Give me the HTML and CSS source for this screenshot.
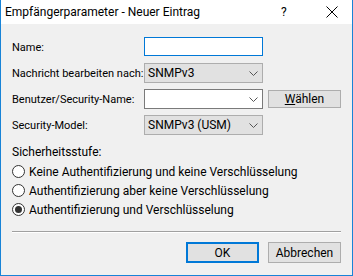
FILE: index.html
```html
<!DOCTYPE html>
<html lang="de">
<head>
    <meta charset="UTF-8">
    <title>Empfängerparameter - Neuer Eintrag</title>
    <link rel="stylesheet" href="styles.css">
</head>
<body>
    <div class="window">
        <div class="titlebar">
            <span class="title">Empfängerparameter - Neuer Eintrag</span>
            <span class="help">?</span>
            <span class="close">
                <svg width="12" height="12" viewBox="0 0 12 12"><path d="M0.5 0.5 L11.5 11.5 M11.5 0.5 L0.5 11.5" stroke="#000" stroke-width="1"/></svg>
            </span>
        </div>

        <div class="content">
            <div class="form">
                <label class="label">Name:</label>
                <div class="input focused"></div>
                <div></div>

                <label class="label">Nachricht bearbeiten nach:</label>
                <div class="select"><span>SNMPv3</span><svg class="chevron" width="9" height="5" viewBox="0 0 9 5"><path d="M0.5 0.5 L4.5 4.5 L8.5 0.5" fill="none" stroke="#555" stroke-width="1"/></svg></div>
                <div></div>

                <label class="label">Benutzer/Security-Name:</label>
                <div class="select combo"><span></span><svg class="chevron" width="9" height="5" viewBox="0 0 9 5"><path d="M0.5 0.5 L4.5 4.5 L8.5 0.5" fill="none" stroke="#555" stroke-width="1"/></svg></div>
                <button class="btn choose"><u>W</u>ählen</button>

                <label class="label">Security-Model:</label>
                <div class="select"><span>SNMPv3 (USM)</span><svg class="chevron" width="9" height="5" viewBox="0 0 9 5"><path d="M0.5 0.5 L4.5 4.5 L8.5 0.5" fill="none" stroke="#555" stroke-width="1"/></svg></div>
                <div></div>
            </div>

            <div class="group-label">Sicherheitsstufe:</div>
            <div class="radios">
                <div class="radio"><span class="dot"></span>Keine Authentifizierung und keine Verschlüsselung</div>
                <div class="radio"><span class="dot"></span>Authentifizierung aber keine Verschlüsselung</div>
                <div class="radio checked"><span class="dot"></span>Authentifizierung und Verschlüsselung</div>
            </div>

            <div class="separator"></div>

            <div class="buttons">
                <button class="btn default">OK</button>
                <button class="btn">Abbrechen</button>
            </div>
        </div>
    </div>
</body>
</html>
```

FILE: styles.css
```css
body {
    margin: 0;
    font-family: Roboto, 'Liberation Sans', sans-serif;
    font-size: 12px;
    color: #000;
    background: #f0f0f0;
}
.window {
    width: 353px;
    height: 276px;
    box-sizing: border-box;
    border: 1px solid #1883d7;
    border-top: none;
    background: #f0f0f0;
}
.titlebar {
    height: 24px;
    background: #fff;
    display: flex;
    align-items: center;
    padding-left: 4px;
}
.title {
    flex: 1;
    font-size: 12px;
}
.help {
    width: 14px;
    margin-right: 31px;
    font-size: 12px;
}
.close {
    display: flex;
    margin-right: 14px;
}
.content {
    padding: 13px 11px 0 11px;
}
.form {
    display: grid;
    grid-template-columns: 127px 119px 73px;
    column-gap: 5px;
    row-gap: 6px;
    grid-auto-rows: 20px;
    align-items: center;
}
.label {
    white-space: nowrap;
    font-size: 11px;
}
.input {
    height: 19px;
    box-sizing: border-box;
    border: 1px solid #0078d7;
    background: #fff;
    align-self: start;
}
.select {
    height: 20px;
    box-sizing: border-box;
    border: 1px solid #adadad;
    background: #e1e1e1;
    display: flex;
    align-items: center;
    justify-content: space-between;
    padding: 0 4px 0 3px;
}
.select.combo {
    background: #fff;
    border-color: #7a7a7a;
}
.chevron {
    display: block;
}
.btn {
    font-family: inherit;
    font-size: 12px;
    color: #000;
    background: #e1e1e1;
    border: 1px solid #adadad;
    padding: 0;
    height: 20px;
    width: 73px;
    box-sizing: border-box;
}
.btn.choose {
    height: 18px;
}
.btn.default {
    border: 2px solid #0078d7;
}
.group-label {
    margin-top: 9px;
    line-height: 16px;
}
.radios {
    margin-top: 2px;
}
.radio {
    height: 19px;
    display: flex;
    align-items: center;
    gap: 4px;
}
.dot {
    width: 13px;
    height: 13px;
    box-sizing: border-box;
    border: 1px solid #333;
    border-radius: 50%;
    background: #fff;
    display: flex;
    align-items: center;
    justify-content: center;
}
.radio.checked .dot::after {
    content: "";
    width: 7px;
    height: 7px;
    border-radius: 50%;
    background: #333;
}
.separator {
    margin-top: 12px;
    width: 329px;
    border-top: 1px solid #a0a0a0;
    border-bottom: 1px solid #fff;
}
.buttons {
    margin-top: 9px;
    width: 329px;
    display: flex;
    justify-content: flex-end;
    gap: 9px;
}
.buttons .btn {
    height: 21px;
}
```
